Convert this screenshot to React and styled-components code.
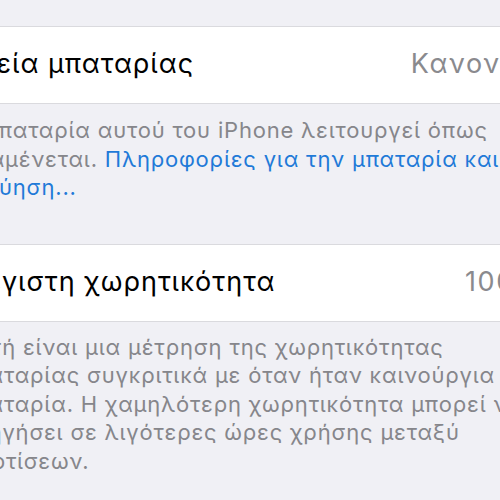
import React from "react";
import styled, { createGlobalStyle } from "styled-components";

const Global = createGlobalStyle`
  html, body { margin: 0; padding: 0; background: #f0f0f5; }
  body { font-family: Inter, "Noto Sans", sans-serif; -webkit-font-smoothing: antialiased; }
`;

const Viewport = styled.div`
  width: 500px;
  height: 500px;
  overflow: hidden;
  background: #f0f0f5;
`;

const Screen = styled.div`
  width: 619px;
  margin-left: -62px;
  padding-top: 26px;
`;

const Group = styled.div`
  background: #ffffff;
  border-top: 1px solid #dadade;
  border-bottom: 1px solid #dadade;
`;

const Row = styled.div`
  height: 76px;
  display: flex;
  align-items: center;
  justify-content: space-between;
  padding: 0 14px 3px 23px;
  box-sizing: border-box;
  font-size: 27px;
  letter-spacing: 1px;
`;

const Label = styled.span`
  color: #000;
  white-space: nowrap;
`;

const Value = styled.span`
  color: #8a8a8e;
  white-space: nowrap;
  letter-spacing: 1.6px;
`;

const Footer = styled.div`
  padding: ${(p) => p.$top}px 10px ${(p) => p.$bottom}px 23px;
  font-size: 22px;
  letter-spacing: 0.8px;
  line-height: 28.5px;
  color: #86868b;
  white-space: nowrap;
`;

const Line = styled.div`
  padding-left: ${(p) => p.$indent || 0}px;
`;

const Link = styled.span`
  color: #1f7ad8;
`;

export default function App() {
  return (
    <Viewport>
      <Global />
      <Screen>
        <Group>
          <Row>
            <Label>Υγεία μπαταρίας</Label>
            <Value>Κανονική</Value>
          </Row>
        </Group>
        <Footer $top={12} $bottom={42}>
          <Line>Η μπαταρία αυτού του iPhone λειτουργεί όπως</Line>
          <Line>
            αναμένεται. <Link>Πληροφορίες για την μπαταρία και</Link>
          </Line>
          <Line $indent={38}>
            <Link>ύηση...</Link>
          </Line>
        </Footer>
        <Group>
          <Row>
            <Label>Μέγιστη χωρητικότητα</Label>
            <Value>100%</Value>
          </Row>
        </Group>
        <Footer $top={11} $bottom={20}>
          <Line>Αυτή είναι μια μέτρηση της χωρητικότητας</Line>
          <Line>μπαταρίας συγκριτικά με όταν ήταν καινούργια</Line>
          <Line>μπαταρία. Η χαμηλότερη χωρητικότητα μπορεί να</Line>
          <Line>οδηγήσει σε λιγότερες ώρες χρήσης μεταξύ</Line>
          <Line>φορτίσεων.</Line>
        </Footer>
      </Screen>
    </Viewport>
  );
}
